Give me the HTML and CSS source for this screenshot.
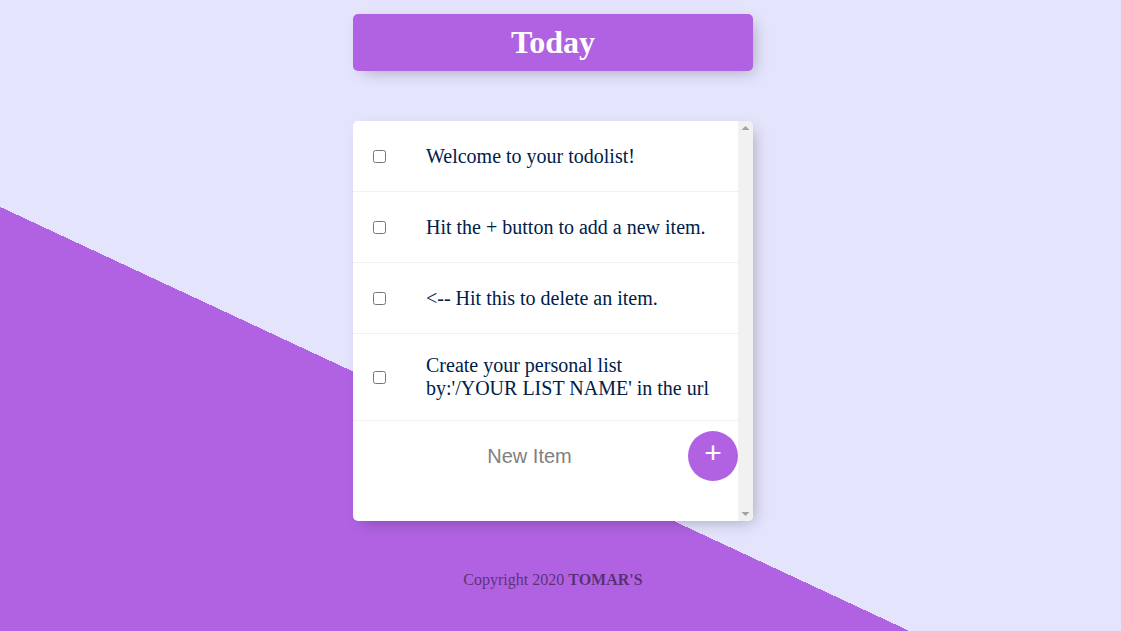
FILE: index.html
```html
<!DOCTYPE html>
<html lang="en">
<head>
<meta charset="utf-8">
<title>To Do List</title>
<link rel="stylesheet" href="styles.css">
</head>
<body>
<main class="page">
  <div class="box heading">
    <h1 class="heading-title">Today</h1>
  </div>

  <div class="box list">
    <div class="list-body">
      <div class="item">
        <input type="checkbox" class="item-check">
        <p class="item-text">Welcome to your todolist!</p>
      </div>
      <div class="item">
        <input type="checkbox" class="item-check">
        <p class="item-text">Hit the + button to add a new item.</p>
      </div>
      <div class="item">
        <input type="checkbox" class="item-check">
        <p class="item-text">&lt;-- Hit this to delete an item.</p>
      </div>
      <div class="item">
        <input type="checkbox" class="item-check">
        <p class="item-text">Create your personal list by:'/YOUR LIST NAME' in the url</p>
      </div>
      <form class="new-item" action="#">
        <input type="text" class="new-item-input" name="newItem" placeholder="New Item" autocomplete="off">
        <button type="button" class="add-btn">+</button>
      </form>
    </div>
    <div class="scrollbar" aria-hidden="true">
      <svg class="scroll-arrow" width="15" height="15" viewBox="0 0 15 15"><polygon points="3.5,9 11.5,9 7.5,5" fill="#a3a3a3"/></svg>
      <svg class="scroll-arrow" width="15" height="15" viewBox="0 0 15 15"><polygon points="3.5,6 11.5,6 7.5,10" fill="#a3a3a3"/></svg>
    </div>
  </div>

  <footer class="footer">Copyright 2020 <b>TOMAR'S</b></footer>
</main>
</body>
</html>
```
FILE: styles.css
```css
html {
  height: 100%;
  background-color: #e4e4fd;
  background-image: linear-gradient(25deg, #b062e2 384.4px, #e4e4fd 384.4px);
  background-repeat: no-repeat;
}

body {
  margin: 0;
  font-family: "Liberation Serif", "Times New Roman", serif;
}

.page {
  padding: 14px 15px 0 0;
  display: flex;
  flex-direction: column;
  align-items: center;
}

.box {
  width: 400px;
  background: #fff;
  border-radius: 5px;
  box-shadow: 5px 5px 15px -5px rgba(0, 0, 0, 0.3);
}

.heading {
  background-color: #b062e2;
  text-align: center;
}

.heading-title {
  margin: 0;
  padding: 10px;
  font-size: 32px;
  line-height: 37px;
  font-weight: bold;
  color: #fff;
}

.list {
  margin-top: 50px;
  height: 400px;
  display: flex;
  overflow: hidden;
}

.list-body {
  flex: 1;
  min-width: 0;
  overflow: hidden;
}

.scrollbar {
  flex: none;
  width: 15px;
  background: #f1f1f1;
  display: flex;
  flex-direction: column;
  justify-content: space-between;
}

.scroll-arrow {
  display: block;
}

.item {
  min-height: 70px;
  display: flex;
  align-items: center;
  border-bottom: 1px solid #f1f1f1;
}

.item-check {
  margin: 20px;
  width: 13px;
  height: 13px;
  flex: none;
}

.item-text {
  margin: 0;
  padding: 20px;
  font-size: 20px;
  line-height: 23px;
  color: #00204a;
}

.new-item {
  display: flex;
  align-items: center;
  height: 70px;
  padding-left: 20px;
  gap: 2px;
}

.new-item-input {
  box-sizing: border-box;
  width: 313px;
  height: 60px;
  border: none;
  padding: 0;
  text-align: center;
  font-family: "Liberation Sans", Arial, sans-serif;
  font-size: 20px;
  color: #333;
  background: transparent;
}

.new-item-input::placeholder {
  color: grey;
  opacity: 1;
}

.new-item-input:focus {
  outline: none;
}

.add-btn {
  flex: none;
  width: 50px;
  height: 50px;
  border: 0;
  border-radius: 50%;
  padding: 0 0 6px;
  background-color: #b062e2;
  color: #fff;
  font-family: "Liberation Sans", Arial, sans-serif;
  font-size: 30px;
  line-height: 44px;
  cursor: pointer;
}

.footer {
  margin-top: 50px;
  font-size: 16px;
  line-height: 18px;
  color: rgba(0, 0, 0, 0.5);
  text-align: center;
}
```
